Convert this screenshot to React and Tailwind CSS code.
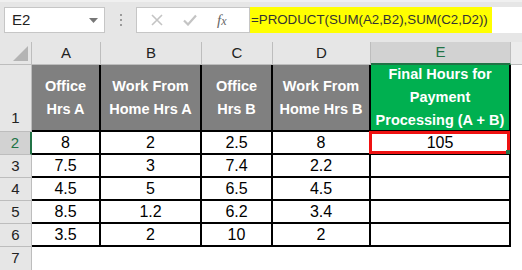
const font = "font-['Liberation_Sans',Arial,sans-serif]"

const headers = [
  ['Office', 'Hrs A'],
  ['Work From', 'Home Hrs A'],
  ['Office', 'Hrs B'],
  ['Work From', 'Home Hrs B'],
]

const data = [
  ['8', '2', '2.5', '8', '105'],
  ['7.5', '3', '7.4', '2.2', ''],
  ['4.5', '5', '6.5', '4.5', ''],
  ['8.5', '1.2', '6.2', '3.4', ''],
  ['3.5', '2', '10', '2', ''],
]

function FormulaBar() {
  return (
    <div className="h-[42px] bg-[#e6e6e6] border-t-[2px] border-[#f0f0f0] flex items-start pt-[5px] pl-[4px]">
      <div className="w-[101px] h-[26px] bg-white border border-[#c6c6c6] flex items-center justify-between pl-[7px] pr-[6px]">
        <span className="text-[15px] text-[#222]">E2</span>
        <svg width="9" height="5" viewBox="0 0 9 5">
          <path d="M0 0h9L4.5 5z" fill="#777" />
        </svg>
      </div>
      <div className="w-[31px] h-[26px] flex flex-col items-center justify-center gap-[3px]">
        <span className="w-[2px] h-[2px] bg-[#9a9a9a]" />
        <span className="w-[2px] h-[2px] bg-[#9a9a9a]" />
        <span className="w-[2px] h-[2px] bg-[#9a9a9a]" />
      </div>
      <div className="w-[114px] h-[26px] bg-white border border-[#c6c6c6] flex items-center">
        <svg className="ml-[14px]" width="12" height="12" viewBox="0 0 12 12">
          <path d="M1 1l10 10M11 1L1 11" stroke="#c4c4c4" strokeWidth="1.6" />
        </svg>
        <svg className="ml-[20px]" width="14" height="12" viewBox="0 0 14 12">
          <path d="M1 6.5l4 4L13 1.5" stroke="#c4c4c4" strokeWidth="2.2" fill="none" />
        </svg>
        <span className="ml-[20px] font-['Liberation_Serif',serif] italic text-[15px] text-[#666] leading-none">
          f<span className="text-[12px]">x</span>
        </span>
      </div>
      <div className="w-[242px] h-[26px] bg-[#ffff00] flex items-center pl-[1px] text-[13.3px] text-[#333]">
        =PRODUCT(SUM(A2,B2),SUM(C2,D2))
      </div>
      <div className="flex-1 h-[26px] bg-white" />
    </div>
  )
}

export default function App() {
  return (
    <div className={`${font} w-[522px] h-[270px] overflow-hidden bg-white`}>
      <FormulaBar />
      <div className="grid grid-cols-[32px_69px_101px_71px_98px_140px_1fr] grid-rows-[23px_67px_23px_23px_23px_23px_23px_23px] text-[#222]">
        {/* column headers */}
        <div className="bg-[#e6e6e6] border-r border-b border-[#bdbdbd] flex items-end justify-end p-[3px]">
          <svg width="15" height="15" viewBox="0 0 15 15">
            <path d="M15 0V15H0z" fill="#b4b4b4" />
          </svg>
        </div>
        {['A', 'B', 'C', 'D'].map((c) => (
          <div key={c} className="bg-[#e6e6e6] border-r border-b border-[#bdbdbd] flex items-center justify-center text-[15px] text-[#222]">
            {c}
          </div>
        ))}
        <div className="bg-[#d2d2d2] border-r border-[#bdbdbd] border-b-2 border-b-[#217346] flex items-center justify-center text-[15px] text-[#217346]">
          E
        </div>
        <div className="bg-[#ececec] border-b border-[#bdbdbd]" />

        {/* row 1 */}
        <div className="bg-[#e6e6e6] border-r border-b border-[#bdbdbd] flex items-end justify-center pb-[2px] text-[15px] text-[#222]">
          1
        </div>
        {headers.map((h, i) => (
          <div key={i} className="bg-[#808080] border-r-2 border-b-2 border-black flex flex-col items-center justify-center text-white font-bold text-[14.5px] leading-[23px]">
            <span>{h[0]}</span>
            <span>{h[1]}</span>
          </div>
        ))}
        <div className="bg-[#00b050] border-r-2 border-b-2 border-black flex flex-col items-center justify-center text-white font-bold text-[14.5px] leading-[23px]">
          <span>Final Hours for</span>
          <span>Payment</span>
          <span>Processing (A + B)</span>
        </div>
        <div className="bg-white" />

        {/* data rows */}
        {data.map((r, ri) => (
          <Row key={ri} n={ri + 2} cells={r} />
        ))}

        {/* row 7 */}
        <div className="bg-[#e6e6e6] border-r border-[#bdbdbd] flex items-center justify-center text-[15px] text-[#222]">
          7
        </div>
        <div className="col-span-6 bg-white" />
      </div>
    </div>
  )
}

function Row({ n, cells }) {
  const selected = n === 2
  return (
    <>
      <div
        className={
          selected
            ? 'bg-[#d2d2d2] border-r-2 border-r-[#217346] border-b border-b-[#bdbdbd] flex items-center justify-center text-[15px] text-[#217346]'
            : 'bg-[#e6e6e6] border-r border-b border-[#bdbdbd] flex items-center justify-center text-[15px] text-[#222]'
        }
      >
        {n}
      </div>
      {cells.map((v, i) => (
        <div key={i} className="relative bg-white border-r-2 border-b-2 border-black flex items-center justify-center text-[16px] text-black">
          {v}
          {selected && i === 4 && (
            <div className="absolute -left-[2px] -top-[1px] -right-[1px] -bottom-[1px] border-[3px] border-[#ee1111]">
              <div className="absolute right-[-3px] bottom-[-3px] w-[4px] h-[4px] bg-[#217346]" />
            </div>
          )}
        </div>
      ))}
      <div className="bg-white" />
    </>
  )
}
